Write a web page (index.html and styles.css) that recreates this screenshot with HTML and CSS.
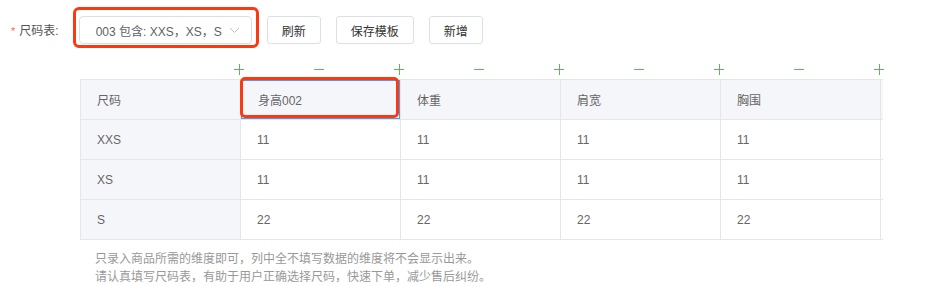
FILE: index.html
```html
<!DOCTYPE html>
<html lang="zh-CN">
<head>
    <meta charset="UTF-8">
    <title>尺码表</title>
    <link rel="stylesheet" href="styles.css">
</head>
<body>

    <div class="form-row">
        <label class="form-label"><span class="required">*</span>尺码表:</label>
        <div class="select">
            <span class="select-text">003 包含: XXS，XS，S</span>
            <svg class="select-arrow" width="11" height="7" viewBox="0 0 11 7">
                <path d="M1 1 L5.5 5.5 L10 1" fill="none" stroke="#c0c4cc" stroke-width="1"/>
            </svg>
        </div>
        <button class="btn">刷新</button>
        <button class="btn">保存模板</button>
        <button class="btn">新增</button>
    </div>

    <div class="sheet">
        <div class="ops-row">
            <span class="op plus"></span>
            <span class="op minus"></span>
            <span class="op plus"></span>
            <span class="op minus"></span>
            <span class="op plus"></span>
            <span class="op minus"></span>
            <span class="op plus"></span>
            <span class="op minus"></span>
            <span class="op plus"></span>
        </div>

        <div class="table-wrap">
            <div class="size-table">
                <div class="cell head">尺码</div>
                <div class="cell head editing"><div class="cell-input">身高002</div></div>
                <div class="cell head">体重</div>
                <div class="cell head">肩宽</div>
                <div class="cell head">胸围</div>
                <div class="cell head"></div>

                <div class="cell side">XXS</div>
                <div class="cell">11</div>
                <div class="cell">11</div>
                <div class="cell">11</div>
                <div class="cell">11</div>
                <div class="cell"></div>

                <div class="cell side">XS</div>
                <div class="cell">11</div>
                <div class="cell">11</div>
                <div class="cell">11</div>
                <div class="cell">11</div>
                <div class="cell"></div>

                <div class="cell side">S</div>
                <div class="cell">22</div>
                <div class="cell">22</div>
                <div class="cell">22</div>
                <div class="cell">22</div>
                <div class="cell"></div>
            </div>
        </div>

        <div class="tips">
            <p>只录入商品所需的维度即可，列中全不填写数据的维度将不会显示出来。</p>
            <p>请认真填写尺码表，有助于用户正确选择尺码，快速下单，减少售后纠纷。</p>
        </div>
    </div>

    <!-- annotation boxes drawn over the screenshot -->
    <div class="mark mark-select"></div>
    <div class="mark mark-head"></div>

</body>
</html>
```

FILE: styles.css
```css
:root {
    --border-color: #e6e6e6;
    --head-bg: #f5f6fa;
    --text-color: #666;
    --green: #5cb85c;
    --mark-red: #fa3a10;
}

html, body {
    margin: 0;
    padding: 0;
    background: #fff;
    font-family: "Liberation Sans", "Noto Sans CJK SC", sans-serif;
    font-size: 12px;
    color: var(--text-color);
}

/* Top form row */
.form-row {
    display: flex;
    align-items: center;
    padding: 16px 0 0 11px;
    height: 28px;
}

.form-label {
    color: #555;
    margin-right: 20px;
    line-height: 28px;
    padding-top: 1px;
}

.required {
    color: #f56c6c;
    margin-right: 4px;
    font-size: 11px;
}

.select {
    box-sizing: border-box;
    width: 173px;
    height: 28px;
    border: 1px solid #dcdfe6;
    border-radius: 4px;
    display: flex;
    align-items: center;
    justify-content: space-between;
    padding: 0 11px 0 16px;
    color: #606266;
    margin-right: 15px;
}

.select-arrow {
    display: block;
}

.btn {
    box-sizing: border-box;
    height: 28px;
    padding: 0 14px;
    margin-right: 15px;
    border: 1px solid #dcdfe6;
    border-radius: 3px;
    background: #fff;
    color: #333;
    font-family: inherit;
    font-size: 12px;
    cursor: pointer;
}

/* Size sheet */
.sheet {
    margin: 18px 0 0 80px;
}

.ops-row {
    display: flex;
    height: 15px;
    margin: 0 0 2px 119px;
}

.op {
    width: 80px;
    height: 15px;
    position: relative;
}

.op::before,
.op::after {
    content: "";
    position: absolute;
    background: var(--green);
}

.op::before {
    left: 35px;
    top: 7px;
    width: 10px;
    height: 1px;
}

.plus::after {
    left: 40px;
    top: 2px;
    width: 1px;
    height: 11px;
}

.minus::after {
    display: none;
}

.table-wrap {
    width: 803px;
    overflow: hidden;
}

.size-table {
    display: grid;
    grid-template-columns: repeat(6, 160px);
    width: 960px;
    border-top: 1px solid var(--border-color);
    border-left: 1px solid var(--border-color);
}

.cell {
    box-sizing: border-box;
    height: 40px;
    padding-left: 16px;
    display: flex;
    align-items: center;
    border-right: 1px solid var(--border-color);
    border-bottom: 1px solid var(--border-color);
}

.cell.head,
.cell.side {
    background: var(--head-bg);
}

.cell.editing {
    padding: 0;
}

.cell-input {
    box-sizing: border-box;
    width: 100%;
    height: 100%;
    display: flex;
    align-items: center;
    padding-left: 16px;
    border: 1px solid #409eff;
    margin-right: -1px;
}

.tips {
    margin: 10px 0 0 15px;
    color: #999;
    line-height: 18px;
}

.tips p {
    margin: 0;
}

/* Red annotation outlines */
.mark {
    position: absolute;
    box-sizing: border-box;
    border: 3px solid var(--mark-red);
    border-radius: 6px;
}

.mark-select {
    left: 73px;
    top: 7px;
    width: 186px;
    height: 41px;
}

.mark-head {
    left: 240px;
    top: 77px;
    width: 159px;
    height: 41px;
    border-radius: 5px;
}
```
